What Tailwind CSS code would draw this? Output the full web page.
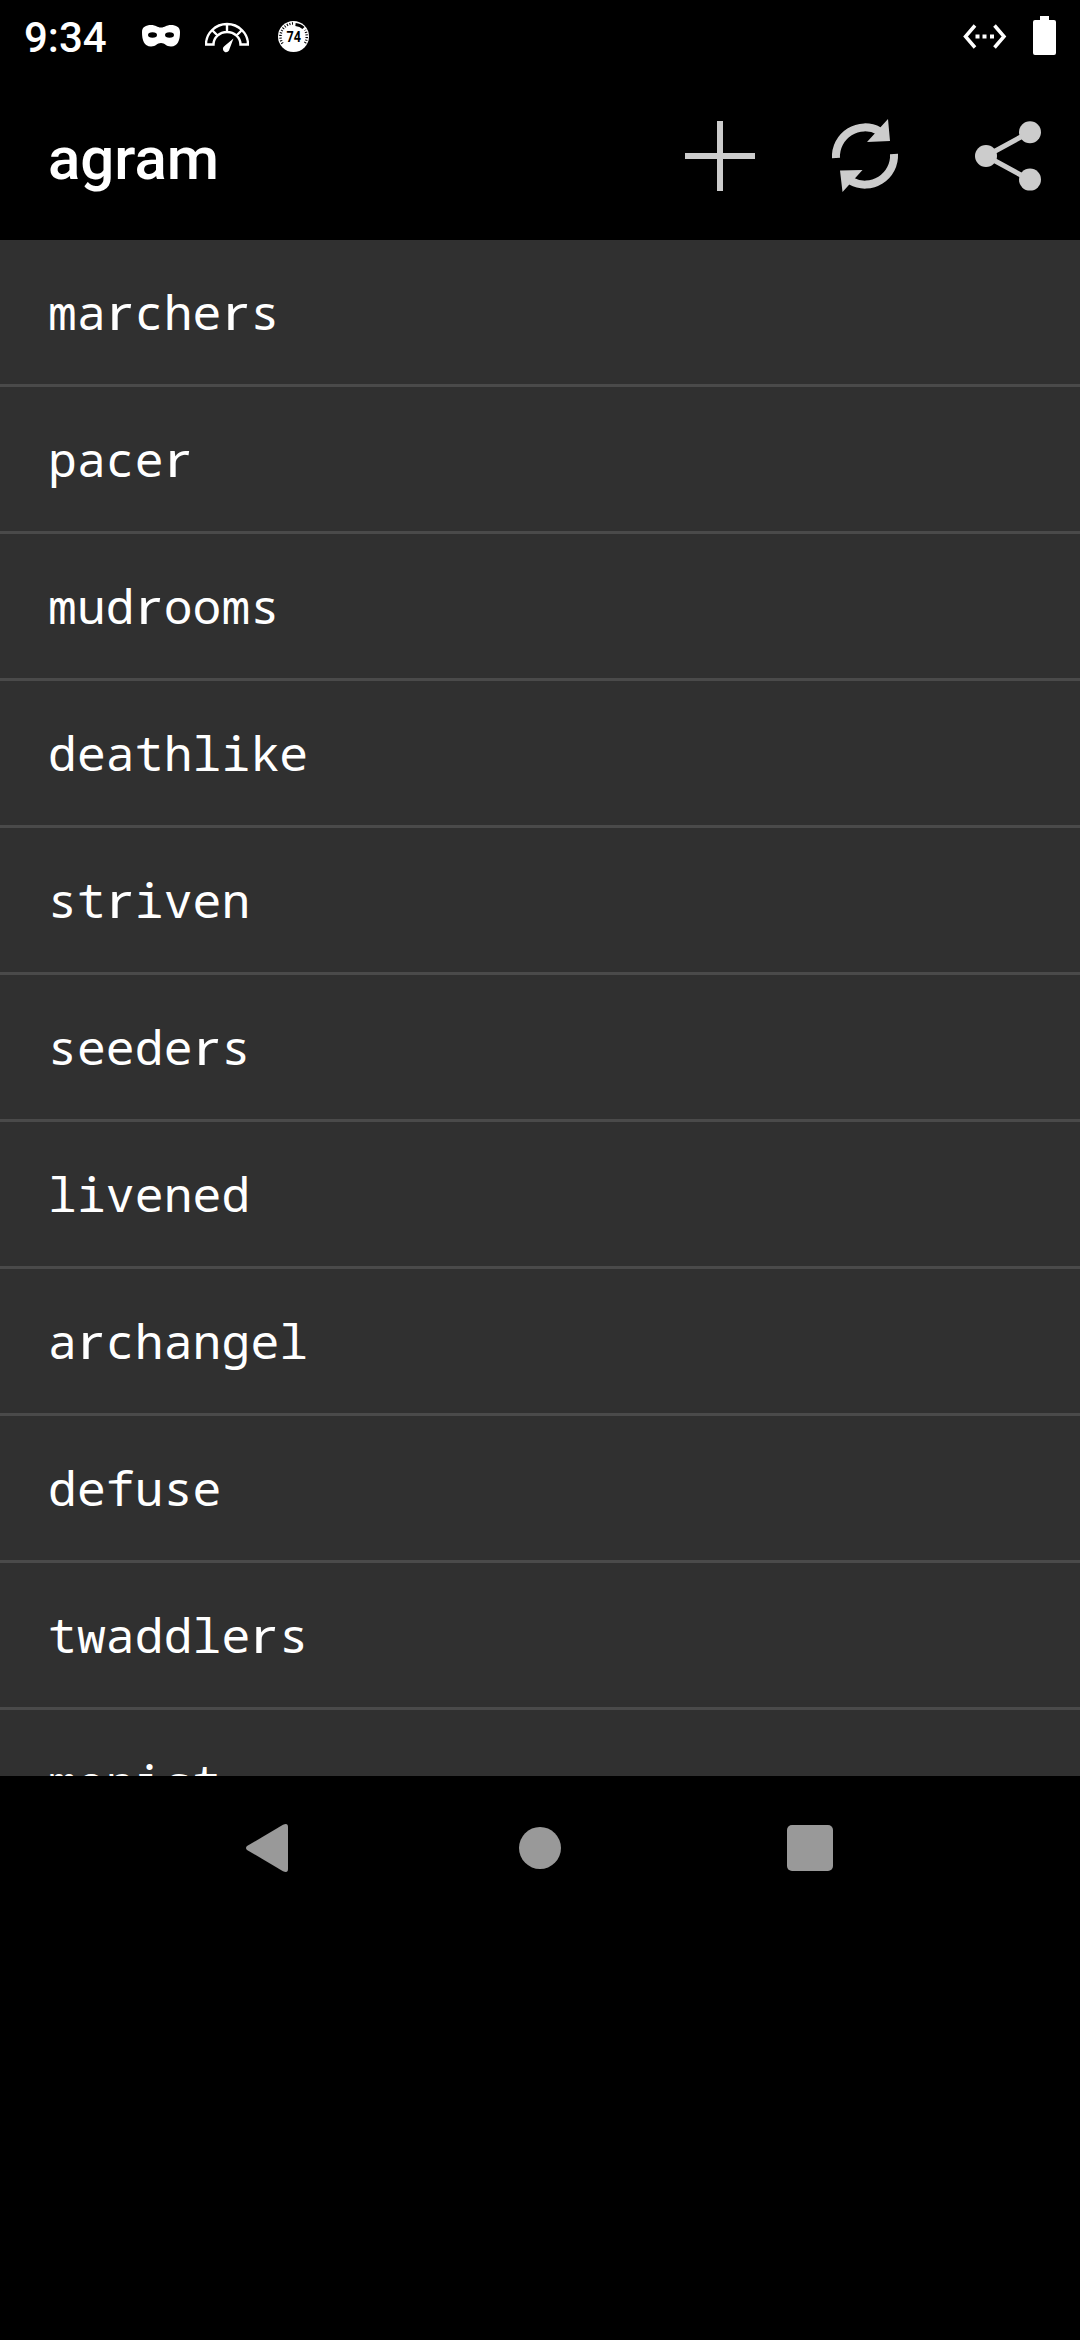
<!DOCTYPE html>
<html lang="en">
<head>
<meta charset="utf-8">
<title>agram</title>
<script src="https://cdn.jsdelivr.net/npm/@tailwindcss/browser@4"></script>
</head>
<body class="flex h-[2340px] w-[1080px] flex-col overflow-hidden bg-black font-['Roboto',sans-serif] text-white">
<header class="flex h-[72px] shrink-0 items-center justify-between pr-6 pl-6">
  <div class="flex items-center">
    <span class="w-[118px] pt-1 text-[42px] leading-none font-medium">9:34</span>
    <svg class="h-[72px] w-[38px]" viewBox="142 0 38 72" fill="#fff"><path d="M142 32c0-5 4-7 9-7 5 0 6 2.500 10 2.500s5-2.500 10-2.500 9 2 9 7c0 8-2 14.500-9 14.500-5 0-6-3.500-10-3.500s-5 3.500-10 3.500c-7 0-9-6.500-9-14.500z"/><ellipse cx="152.500" cy="35" rx="4.500" ry="2.800" fill="#000"/><ellipse cx="169.500" cy="35" rx="4.500" ry="2.800" fill="#000"/></svg>
    <svg class="ml-[25px] h-[72px] w-[44px]" viewBox="205 0 44 72" fill="none" stroke="#fff" stroke-width="2.400"><path d="M206 44.500a21 20.500 0 0 1 42 0h-7.500a13.500 12.500 0 0 0-27 0zM212 30l5.500 5.500M227 24v8M242 30l-5.500 5.500"/><path d="M233.500 38.500l-9 7.500a3.300 3.300 0 1 0 5 3z" fill="#fff" stroke="none"/></svg>
    <svg class="ml-[28px] h-[72px] w-[34px]" viewBox="277 0 34 72"><circle cx="293.500" cy="36.500" r="15.500" fill="#fff"/><path d="M282.500 43.500a13 13 0 0 1 11-20M305 43a13 13 0 0 0 0-13" fill="none" stroke="#000" stroke-width="2.500" stroke-dasharray="1 1.600"/><path d="M295.500 24.500q5 .5 8 3.500" fill="none" stroke="#000" stroke-width="3"/><text x="293.800" y="41.500" text-anchor="middle" font-size="14" font-weight="700" textLength="14.500" lengthAdjust="spacingAndGlyphs" fill="#000">74</text></svg>
  </div>
  <div class="flex items-center">
    <svg class="h-[72px] w-[44px]" viewBox="963 0 44 72"><path d="M975 25.500L965.500 36.500l9.500 11M994.500 25.500l9.500 11-9.500 11" fill="none" stroke="#fff" stroke-width="3.500"/><path d="M975.500 34.500h4v4h-4zM982.500 34.500h4v4h-4zM990 34.500h4v4h-4z" fill="#fff"/></svg>
    <svg class="ml-[26px] h-[72px] w-[23px]" viewBox="1033 0 23 72" fill="#fff"><path d="M1040 16h9v4h5q2 0 2 2v31q0 2-2 2h-19q-2 0-2-2V22q0-2 2-2h5z"/></svg>
  </div>
</header>
<div class="flex h-[168px] shrink-0 items-center justify-between pl-12">
  <h1 class="pt-1.5 text-[60px] leading-none font-medium">agram</h1>
  <div class="flex">
    <svg class="h-[168px] w-36" viewBox="648 72 144 168" fill="#ccc"><path d="M717 121h6v32h32v6h-32v32h-6v-32h-32v-6h32z"/></svg>
    <svg class="h-[168px] w-36" viewBox="792 72 144 168"><path d="M836 158a29 29 0 0 1 43-27M894 154a29 29 0 0 1-43 27" fill="none" stroke="#ccc" stroke-width="8"/><path d="M888 119l2 22-23 1zM840 170.500l22.500-.5-20 22z" fill="#ccc"/></svg>
    <svg class="h-[168px] w-36" viewBox="936 72 144 168" fill="#ccc"><path d="M1030 132l-44 24 44 24" fill="none" stroke="#ccc" stroke-width="5"/><circle cx="1030" cy="132.300" r="11"/><circle cx="986" cy="156" r="11"/><circle cx="1030" cy="179.600" r="11"/></svg>
  </div>
</div>
<!-- the r is set in the proportional face, without a slab foot, in a cell of the monospace width -->
<ul class="h-[1536px] shrink-0 overflow-hidden bg-[#303030] font-['Noto_Sans_Mono','DejaVu_Sans_Mono',monospace] text-[48px] leading-[144px] tracking-[0.12px] [&>li]:h-[147px] [&>li]:border-b-3 [&>li]:border-[#4a4a4a] [&>li]:pl-12 [&_i]:inline-block [&_i]:w-[28.9px] [&_i]:origin-left [&_i]:scale-x-125 [&_i]:pl-[1px] [&_i]:font-['Noto_Sans'] [&_i]:not-italic">
  <li>ma<i>r</i>che<i>r</i>s</li>
  <li>pace<i>r</i></li>
  <li>mud<i>r</i>ooms</li>
  <li>deathlike</li>
  <li>st<i>r</i>iven</li>
  <li>seede<i>r</i>s</li>
  <li>livened</li>
  <li>a<i>r</i>changel</li>
  <li>defuse</li>
  <li>twaddle<i>r</i>s</li>
  <li>monist</li>
</ul>
<nav class="flex h-36 shrink-0 items-center pl-[246px]">
  <svg class="h-12 w-[42px]" viewBox="0 0 42 48" fill="#999"><path d="M1 22L37 .8Q42-1.500 42 3V45q0 4.500-5 2.200L1 26q-2-2 0-4z"/></svg>
  <div class="ml-[231px] size-[42px] rounded-full bg-[#999]"></div>
  <div class="ml-[226px] size-[46px] rounded-[5px] bg-[#999]"></div>
</nav>
</body>
</html>
